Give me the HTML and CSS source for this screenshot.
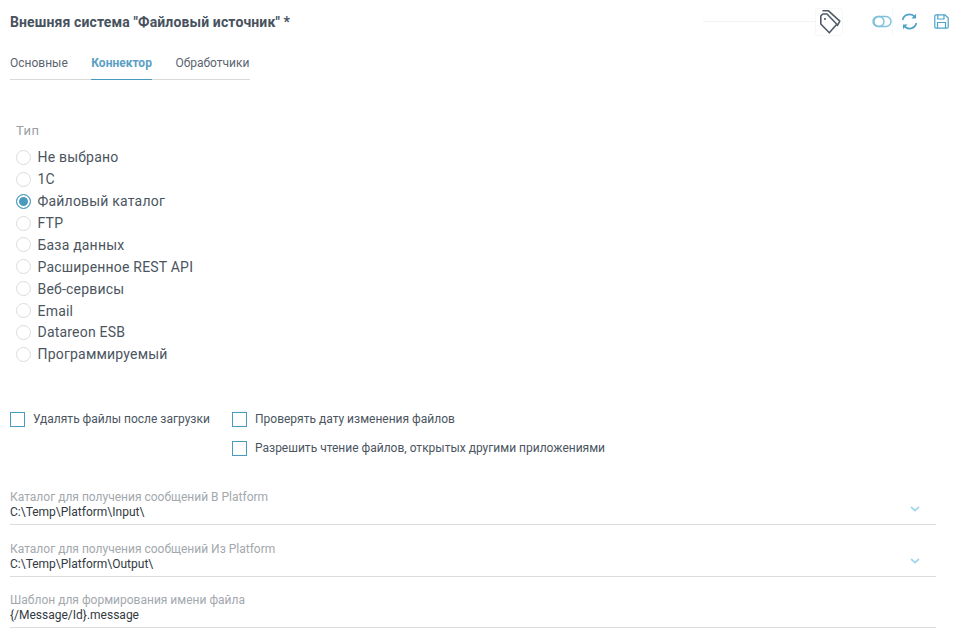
FILE: index.html
```html
<!DOCTYPE html>
<html lang="ru">
<head>
    <meta charset="UTF-8">
    <title>Внешняя система</title>
    <link rel="stylesheet" href="styles.css">
</head>
<body>
    <div class="page">
        <div class="header">
            <h1 class="title">Внешняя система "Файловый источник" *</h1>
            <div class="tools">
                <div class="tools-line"></div>
                <div class="tag-box">
                    <svg width="24" height="26" viewBox="0 0 24 26" fill="none" stroke="#4f5b66" stroke-width="1.6" stroke-linejoin="round" stroke-linecap="round">
                        <path d="M3.8 7V15L12.3 23.8 19.8 15.2 10 5H5.8Z"/>
                        <path d="M6 1.8H11.5L22.8 12.2 20.3 16.5"/>
                        <circle cx="8" cy="10" r="1.1" fill="#4f5b66" stroke="none"/>
                    </svg>
                </div>
                <svg class="icon-toggle" width="20" height="13" viewBox="0 0 20 13" fill="none" stroke="#7fc0dc" stroke-width="1.4">
                    <rect x="1" y="1.5" width="18" height="10" rx="5"/>
                    <circle cx="7" cy="6.5" r="5"/>
                </svg>
                <div class="tool-sep"></div>
                <svg class="icon-refresh" width="17" height="17" viewBox="0 0 17 17" fill="none" stroke="#4da3c7" stroke-width="1.7">
                    <path d="M1.6 7A7 7 0 0 1 14 4.2"/>
                    <path d="M15.4 10A7 7 0 0 1 3 12.8"/>
                    <path d="M15 .8V5.4H10.4Z" fill="#4da3c7" stroke="none"/>
                    <path d="M2 16.2V11.6H6.6Z" fill="#4da3c7" stroke="none"/>
                </svg>
                <svg class="icon-save" width="15" height="15" viewBox="0 0 15 15" fill="none" stroke="#4da3c7" stroke-width="1.2">
                    <path d="M.8 2A1.2 1.2 0 0 1 2 .8H11L14.2 4V13A1.2 1.2 0 0 1 13 14.2H2A1.2 1.2 0 0 1 .8 13Z"/>
                    <path d="M3.8 1V5H10V1"/>
                    <path d="M3.5 14V8.5H11.5V14"/>
                </svg>
            </div>
        </div>

        <div class="tabs">
            <div class="tab">Основные</div>
            <div class="tab active">Коннектор</div>
            <div class="tab">Обработчики</div>
        </div>

        <div class="type-block">
            <div class="type-label">Тип</div>
            <div class="radio-row"><span class="radio"></span>Не выбрано</div>
            <div class="radio-row"><span class="radio"></span>1С</div>
            <div class="radio-row"><span class="radio checked"></span>Файловый каталог</div>
            <div class="radio-row"><span class="radio"></span>FTP</div>
            <div class="radio-row"><span class="radio"></span>База данных</div>
            <div class="radio-row"><span class="radio"></span>Расширенное REST API</div>
            <div class="radio-row"><span class="radio"></span>Веб-сервисы</div>
            <div class="radio-row"><span class="radio"></span>Email</div>
            <div class="radio-row"><span class="radio"></span>Datareon ESB</div>
            <div class="radio-row"><span class="radio"></span>Программируемый</div>
        </div>

        <div class="checks">
            <div class="check-col first">
                <div class="check-row"><span class="checkbox"></span>Удалять файлы после загрузки</div>
            </div>
            <div class="check-col">
                <div class="check-row"><span class="checkbox"></span>Проверять дату изменения файлов</div>
                <div class="check-row"><span class="checkbox"></span>Разрешить чтение файлов, открытых другими приложениями</div>
            </div>
        </div>

        <div class="fields">
            <div class="field">
                <div class="field-label">Каталог для получения сообщений В Platform</div>
                <div class="field-value">C:\Temp\Platform\Input\</div>
                <svg class="chevron" width="10" height="6" viewBox="0 0 10 6" fill="none" stroke="#a5d8ee" stroke-width="1.8"><path d="M1 1L5 4.5 9 1"/></svg>
            </div>
            <div class="field">
                <div class="field-label">Каталог для получения сообщений Из Platform</div>
                <div class="field-value">C:\Temp\Platform\Output\</div>
                <svg class="chevron" width="10" height="6" viewBox="0 0 10 6" fill="none" stroke="#a5d8ee" stroke-width="1.8"><path d="M1 1L5 4.5 9 1"/></svg>
            </div>
            <div class="field">
                <div class="field-label">Шаблон для формирования имени файла</div>
                <div class="field-value">{/Message/Id}.message</div>
            </div>
        </div>
    </div>
</body>
</html>
```

FILE: styles.css
```css
* {
    margin: 0;
    padding: 0;
    box-sizing: border-box;
    font-family: Roboto, Arial, sans-serif;
}

body {
    background: #fff;
    color: #454f5b;
    height: 641px;
    overflow: hidden;
}

.page {
    padding: 0 18px 0 10px;
}

/* Header */
.header {
    display: flex;
    justify-content: space-between;
    align-items: center;
    height: 43px;
}

.title {
    font-size: 14px;
    font-weight: 700;
    letter-spacing: 0.13px;
    color: #47525e;
}

.tools {
    display: flex;
    align-items: center;
    margin-right: -13px;
}

.tools-line {
    width: 112px;
    height: 1px;
    background: #f3f3f3;
}

.tag-box {
    width: 28px;
    height: 28px;
    display: flex;
    align-items: center;
    justify-content: center;
    border: 1px solid #f7f7f7;
    border-radius: 3px;
    margin-right: 29px;
}

.tool-sep {
    width: 1px;
    height: 28px;
    background: #f3f8fb;
    margin: 0 8px 0 0;
}

.icon-refresh {
    margin-right: 16px;
}

/* Tabs */
.tabs {
    display: flex;
    gap: 23.5px;
    width: 240px;
    height: 37px;
    border-bottom: 1px solid #d9d9d9;
}

.tab {
    font-size: 12px;
    line-height: 40px;
    color: #5a6570;
    height: 37px;
}

.tab.active {
    font-weight: 700;
    color: #5c9fc4;
    border-bottom: 1px solid #4a9abf;
}

/* Type */
.type-block {
    margin-top: 41px;
    padding-left: 6px;
}

.type-label {
    font-size: 13px;
    letter-spacing: 0.5px;
    line-height: 20px;
    color: #9aa0a6;
    margin-bottom: 5.4px;
}

.radio-row {
    display: flex;
    align-items: center;
    height: 21.9px;
    font-size: 14px;
    letter-spacing: 0.2px;
    color: #4b5560;
}

.radio {
    width: 15px;
    height: 15px;
    border: 1px solid #dcdcdc;
    border-radius: 50%;
    margin-right: 6.5px;
    flex: none;
}

.radio.checked {
    border-color: #4a9abf;
    background: #4a9abf;
    box-shadow: inset 0 0 0 2px #fff;
}

/* Checkboxes */
.checks {
    display: flex;
    margin-top: 46.6px;
}

.check-col.first {
    width: 222px;
}

.check-row {
    display: flex;
    align-items: center;
    height: 15px;
    margin-bottom: 14px;
    font-size: 12px;
    color: #4b5560;
}

.checkbox {
    width: 15px;
    height: 15px;
    border: 1px solid #4a9abf;
    margin-right: 8px;
    flex: none;
}

/* Fields */
.fields {
    margin-top: 3px;
}

.field {
    position: relative;
    height: 52px;
    padding-top: 17px;
    border-bottom: 1px solid #dcdcdc;
}

.field:last-child {
    height: 51px;
    padding-top: 16px;
}

.field-label {
    font-size: 12px;
    line-height: 15px;
    color: #a3a8ad;
}

.field-value {
    font-size: 12px;
    line-height: 15px;
    color: #333a42;
}

.chevron {
    position: absolute;
    right: 16px;
    top: 33px;
}
```
